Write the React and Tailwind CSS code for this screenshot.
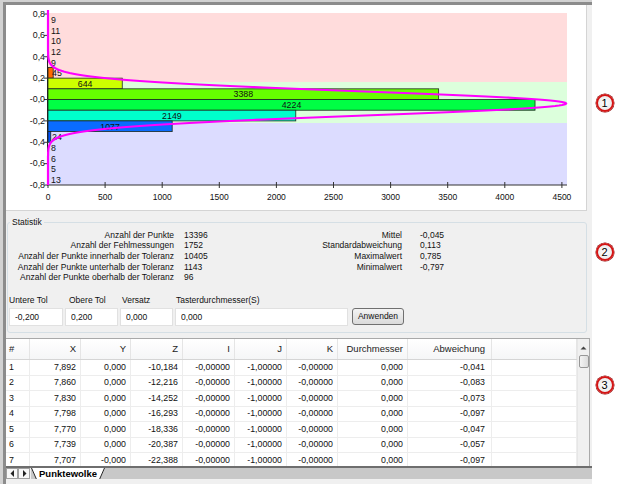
import React from 'react'

// chart geometry, page coordinates
const yOf = (v) => 14 + (0.8 - v) * 106.9
const X0 = 48
const SCALE = 0.1153

const bars = [
  { top: 0.3, n: 45, fill: '#ff6a00', side: true },
  { top: 0.2, n: 644, fill: '#ccff00' },
  { top: 0.1, n: 3388, fill: '#66ff00' },
  { top: 0.0, n: 4224, fill: '#00ff44' },
  { top: -0.1, n: 2149, fill: '#00ffcc' },
  { top: -0.2, n: 1077, fill: '#0a6cff' },
  { top: -0.3, n: 24, fill: '#0050ff', side: true },
]

const tails = [
  [0.8, '9'],
  [0.7, '11'],
  [0.6, '10'],
  [0.5, '12'],
  [0.4, '9'],
  [-0.4, '8'],
  [-0.5, '6'],
  [-0.6, '5'],
  [-0.7, '13'],
]

const yLabels = ['0,8', '0,6', '0,4', '0,2', '-0,0', '-0,2', '-0,4', '-0,6', '-0,8']
const xLabels = ['0', '500', '1000', '1500', '2000', '2500', '3000', '3500', '4000', '4500']

const curve = Array.from({ length: 351 }, (_, i) => {
  const y = 10 + i * 0.5
  const x = X0 + 518 * Math.exp(-0.5 * ((y - 103.5) / 12.1) ** 2)
  return `${x.toFixed(1)},${y}`
}).join(' ')

function Chart() {
  return (
    <div className="h-[206px] w-[581px] border-r border-b border-[#d4d4d4] bg-white">
      <svg width="580" height="205" viewBox="6 5 580 205" className="block">
        <rect x={X0} y="13" width="519" height="69" fill="#ffdcdc" />
        <rect x={X0} y="82" width="519" height="41" fill="#dcffdc" />
        <rect x={X0} y="123" width="519" height="62" fill="#dcdcff" />
        {bars.map((b) => {
          const y = yOf(b.top)
          const w = Math.max(b.n * SCALE, 1)
          return (
            <g key={b.n}>
              <rect x={X0} y={y} width={w} height="10.7" fill={b.fill} stroke="#1f2a1f" strokeWidth="0.8" />
              <text
                x={b.side ? X0 + 4 : X0 + w / 2}
                y={y + 6.3}
                textAnchor={b.side ? 'start' : 'middle'}
                dominantBaseline="middle"
                fontSize="8.8"
                fill="#111"
              >
                {b.n}
              </text>
            </g>
          )
        })}
        {tails.map(([v, t], i) => (
          <text key={i} x={X0 + 3} y={yOf(v) + 6.5} dominantBaseline="middle" fontSize="8.8" fill="#111">
            {t}
          </text>
        ))}
        <line x1="47.5" y1="13" x2="47.5" y2="185" stroke="#222" strokeWidth="1" />
        <line x1="47" y1="185" x2="567" y2="185" stroke="#333" strokeWidth="1" />
        {yLabels.map((t, i) => (
          <g key={t}>
            <line x1="44" y1={14 + i * 21.38} x2="48" y2={14 + i * 21.38} stroke="#333" />
            <text x="45" y={14.5 + i * 21.38} textAnchor="end" dominantBaseline="middle" fontSize="8.8" fill="#111">
              {t}
            </text>
          </g>
        ))}
        {xLabels.map((t, i) => (
          <g key={t}>
            <line x1={X0 + i * 57.1} y1="182" x2={X0 + i * 57.1} y2="188" stroke="#333" />
            <text x={X0 + i * 57.1} y="198" textAnchor="middle" dominantBaseline="middle" fontSize="8.5" fill="#111">
              {t}
            </text>
          </g>
        ))}
        <polyline points={curve} fill="none" stroke="#ff00ff" strokeWidth="2.2" />
      </svg>
    </div>
  )
}

const stats = [
  ['Anzahl der Punkte', '13396', 'Mittel', '-0,045'],
  ['Anzahl der Fehlmessungen', '1752', 'Standardabweichung', '0,113'],
  ['Anzahl der Punkte innerhalb der Toleranz', '10405', 'Maximalwert', '0,785'],
  ['Anzahl der Punkte unterhalb der Toleranz', '1143', 'Minimalwert', '-0,797'],
  ['Anzahl der Punkte oberhalb der Toleranz', '96', '', ''],
]

function Field({ value, width }) {
  return (
    <input
      readOnly
      value={value}
      className={`h-[18px] ${width} border border-[#e1e1e1] bg-white pl-[5px] text-[8.5px] text-[#111] outline-none`}
    />
  )
}

function Statistik() {
  return (
    <div className="h-[126px]">
      <fieldset className="mt-[6px] ml-[1px] h-[116px] w-[580px] rounded-[3px] border border-[#d5dfe5]">
        <legend className="ml-[2px] px-[2px] text-[8.5px] leading-[10px] text-[#111]">Statistik</legend>
        <div className="mt-[2.6px] grid grid-cols-[166px_70px_158px_auto] text-[8.5px] leading-[10.7px] text-[#111]">
          {stats.map(([a, b, c, d]) => (
            <React.Fragment key={a}>
              <span className="text-right">{a}</span>
              <span className="pl-[10px]">{b}</span>
              <span className="text-right">{c}</span>
              <span className="pl-[18px]">{d}</span>
            </React.Fragment>
          ))}
        </div>
        <div className="mt-[12px] flex pl-[1px] text-[8.5px] leading-[10px] text-[#111]">
          <span className="w-[60px]">Untere Tol</span>
          <span className="w-[53px]">Obere Tol</span>
          <span className="w-[54px]">Versatz</span>
          <span>Tasterdurchmesser(S)</span>
        </div>
        <div className="mt-[3px] flex items-start gap-[2px] pl-[1px]">
          <Field value="-0,200" width="w-[54px]" />
          <Field value="0,200" width="w-[53px]" />
          <Field value="0,000" width="w-[53px]" />
          <Field value="0,000" width="w-[173px]" />
          <button className="ml-[2px] h-[17px] w-[52px] rounded-[3px] border border-[#707070] bg-linear-to-b from-[#f4f4f4] to-[#dadada] text-[8.5px] text-[#111]">
            Anwenden
          </button>
        </div>
      </fieldset>
    </div>
  )
}

const cols = 'grid grid-cols-[24px_51px_50px_52px_52px_52px_51px_70px_84px_85px]'
const heads = ['#', 'X', 'Y', 'Z', 'I', 'J', 'K', 'Durchmesser', 'Abweichung', '']
const rows = [
  ['1', '7,892', '0,000', '-10,184', '-0,041'],
  ['2', '7,860', '0,000', '-12,216', '-0,083'],
  ['3', '7,830', '0,000', '-14,252', '-0,073'],
  ['4', '7,798', '0,000', '-16,293', '-0,097'],
  ['5', '7,770', '0,000', '-18,336', '-0,047'],
  ['6', '7,739', '0,000', '-20,387', '-0,057'],
  ['7', '7,707', '-0,000', '-22,388', '-0,097'],
].map(([n, x, y, z, a]) => [n, x, y, z, '-0,00000', '-1,00000', '-0,00000', '0,000', a, ''])

function cellClass(i) {
  if (i === 0) return 'pl-[3px] text-left'
  if (i === 8) return 'pr-[6px] text-right'
  return 'pr-[4px] text-right'
}

function Table() {
  return (
    <div className="mt-[1px] flex h-[128px] w-[584px] border-t border-r border-[#a9a9a9] bg-white">
      <div className="flex w-[571px] flex-col overflow-hidden">
        <div className={`${cols} h-[21px] shrink-0 items-center border-b border-[#d5d5d5] bg-linear-to-b from-white to-[#f5f6f7] text-[9.5px] text-[#222]`}>
          {heads.map((h, i) => (
            <div key={i} className={`flex h-full items-center ${i === 0 ? 'justify-start' : 'justify-end'} border-r border-[#e5e5e5] ${cellClass(i)}`}>
              {h}
            </div>
          ))}
        </div>
        {rows.map((r) => (
          <div key={r[0]} className={`${cols} h-[15.5px] shrink-0 text-[8.8px] text-[#111]`}>
            {r.map((c, i) => (
              <div key={i} className={`flex items-center ${i === 0 ? 'justify-start' : 'justify-end'} border-r border-b border-[#ededed] ${cellClass(i)}`}>
                {c}
              </div>
            ))}
          </div>
        ))}
      </div>
      <div className="flex w-[12px] flex-col items-center border-l border-[#e6e6e6] bg-[#f0f0f0]">
        <svg width="7" height="4" viewBox="0 0 7 4" className="mt-[7px]">
          <path d="M0.5 3.5 L3.5 0.5 L6.5 3.5 Z" fill="#444" />
        </svg>
        <div className="mt-[5px] h-[13px] w-[10px] rounded-[2px] border border-[#979797] bg-linear-to-r from-[#f4f4f4] to-[#dcdcdc]" />
      </div>
    </div>
  )
}

function Tabs() {
  return (
    <div className="flex h-[18px] flex-col">
      <div className="h-[2px] bg-[#6e6e6e]" />
      <div className="flex h-[11px] items-stretch bg-[#c8c8c8]">
        <div className="flex bg-[#f0f0f0] pr-[1px]">
          {['M5 1 L1.5 4.5 L5 8 Z', 'M2 1 L5.5 4.5 L2 8 Z'].map((d) => (
            <div key={d} className="flex w-[12px] items-center justify-center border border-[#a0a0a0] bg-[#f7f7f7]">
              <svg width="7" height="9" viewBox="0 0 7 9">
                <path d={d} fill="#222" />
              </svg>
            </div>
          ))}
        </div>
        <div className="flex h-[13px] items-stretch">
          <svg width="6" height="13" viewBox="0 0 6 13" className="block">
            <path d="M0 0 L6 13 L6 0 Z" fill="#fff" />
            <path d="M0.5 0 L6 12.5" stroke="#222" strokeWidth="1" />
          </svg>
          <div className="flex items-center border-b border-[#222] bg-white px-[2px] text-[9.5px] leading-none font-bold text-[#000]">
            Punktewolke
          </div>
          <svg width="6" height="13" viewBox="0 0 6 13" className="block">
            <path d="M0 0 L0 13 L6 0 Z" fill="#fff" />
            <path d="M0 12.5 L5.5 0" stroke="#222" strokeWidth="1" />
          </svg>
        </div>
      </div>
      <div className="flex-1 bg-[#f0f0f0]" />
    </div>
  )
}

function Callout({ n, className }) {
  return (
    <div
      className={`flex h-[18px] w-[18px] items-center justify-center rounded-full border-2 border-[#d41414] bg-radial from-white to-[#e4e4e4] text-[11px] leading-none text-black shadow-[0_0_0_0.5px_#8a0000] ${className}`}
    >
      {n}
    </div>
  )
}

export default function App() {
  return (
    <div className="flex h-[484px] w-[617px] overflow-hidden bg-white font-['Liberation_Sans',Arial,sans-serif]">
      <div className="flex h-full w-[592px] flex-col border-t-2 border-l-[3px] border-[#d2d2d2] bg-[#f0f0f0]">
        <div className="flex flex-1 flex-col border-t-[3px] border-l-[3px] border-[#8c8c8c]">
          <Chart />
          <Statistik />
          <Table />
          <Tabs />
        </div>
      </div>
      <div className="flex w-[25px] flex-col items-center">
        <Callout n="1" className="mt-[94px]" />
        <Callout n="2" className="mt-[131px]" />
        <Callout n="3" className="mt-[115px]" />
      </div>
    </div>
  )
}
